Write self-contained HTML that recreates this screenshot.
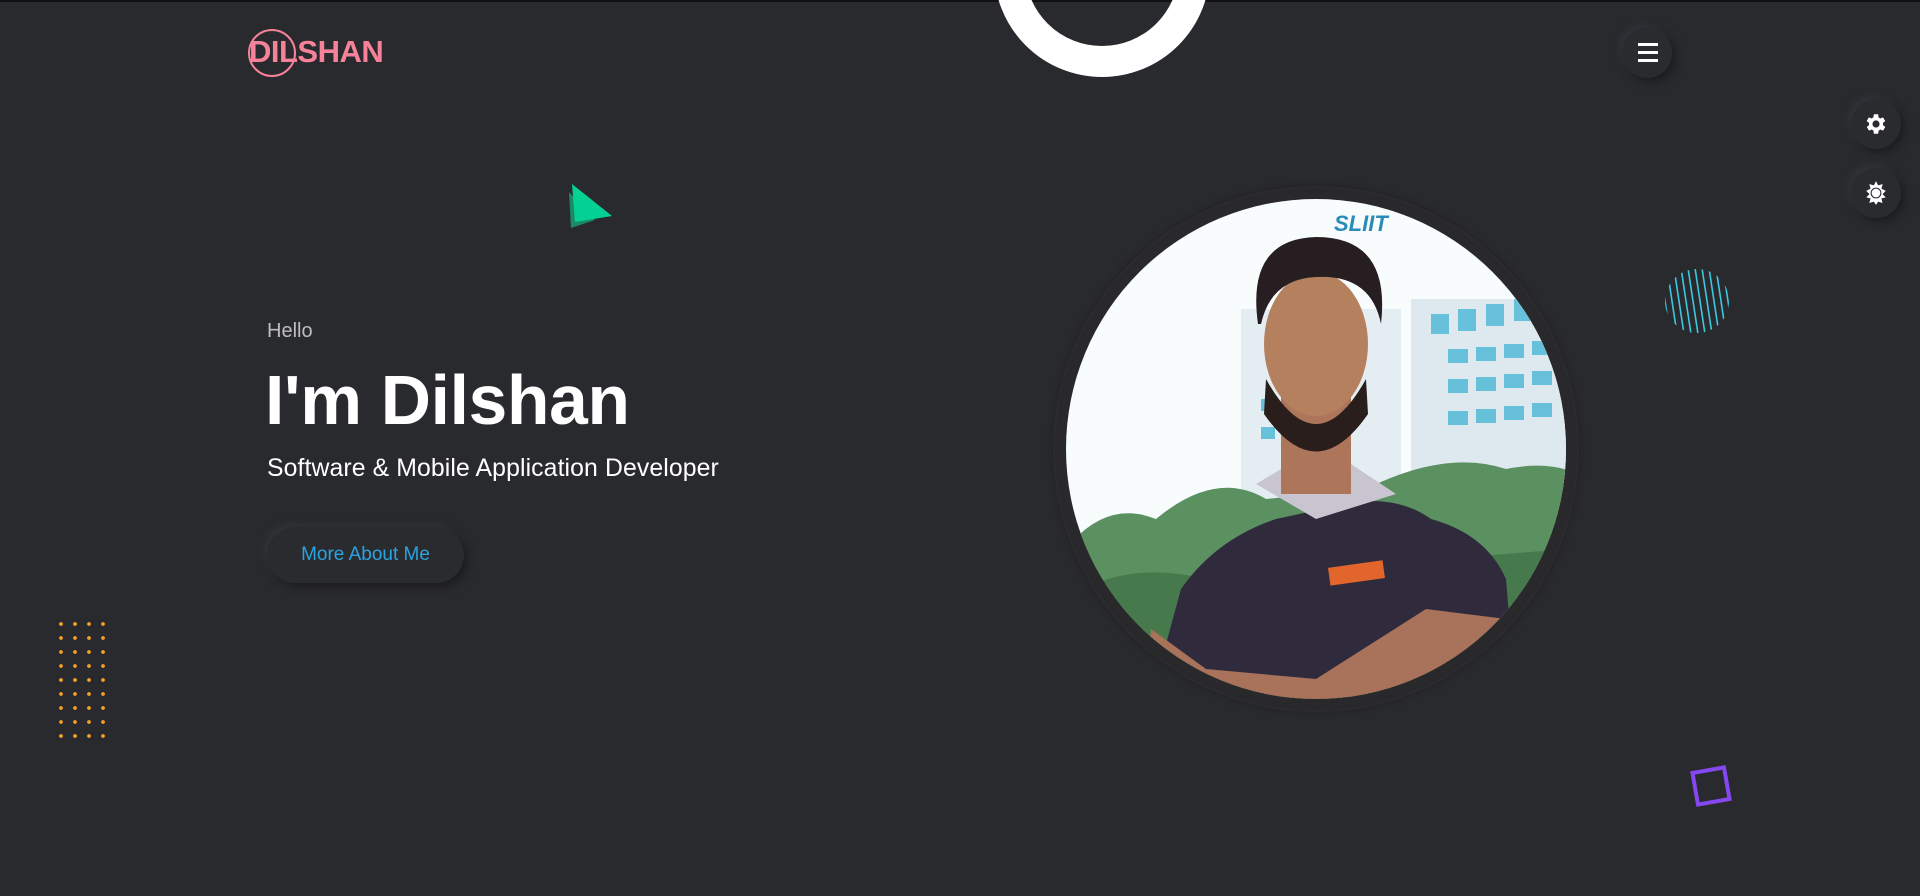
<!DOCTYPE html>
<html><head><meta charset="utf-8"><style>
*{margin:0;padding:0;box-sizing:border-box}
html,body{width:1920px;height:896px;overflow:hidden;background:#292a2e;font-family:"Liberation Sans",Arial,sans-serif}
.abs{position:absolute}
.topline{left:0;top:0;width:1920px;height:2px;background:#111}
.logo{left:249px;top:34px;font-size:31px;font-weight:bold;color:#f6829a;letter-spacing:-0.5px}
.logoc{left:248px;top:29px;width:48px;height:48px;border:2px solid #f6829a;border-radius:50%}
.ring{left:994px;top:-139px;width:216px;height:216px;border-radius:50%;border:31px solid #fff}
.btn{border-radius:50%;background:#2a2b2f;box-shadow:4px 4px 8px #1c1d20,-3px -3px 7px #34353a}
.hello{left:267px;top:320px;font-size:20px;color:#bdbdbd}
.h1{left:265px;top:360px;font-size:69.5px;font-weight:bold;color:#fff;letter-spacing:-0.3px}
.sub{left:267px;top:455px;font-size:24.8px;color:#fff;letter-spacing:0.1px}
.more{left:267px;top:527px;width:197px;height:56px;border-radius:28px;background:#2a2b2f;box-shadow:4px 4px 8px #1c1d20,-3px -3px 7px #34353a;color:#2aa3e0;font-size:19px;line-height:56px;text-align:center}
.dots{left:54px;top:617px;width:56px;height:126px;background-image:radial-gradient(circle,#f5a11f 1.7px,transparent 2.1px);background-size:14px 14px}
.photoOuter{left:1053px;top:186px;width:526px;height:526px;border-radius:50%;background:#29292c;box-shadow:0 0 6px #202124, inset 0 0 4px #333}
.sq{left:1693px;top:768px;width:36px;height:36px;border:4px solid #8447f0;transform:rotate(-10deg)}
</style></head><body>
<div class="abs topline"></div>
<div class="abs logoc"></div>
<div class="abs logo">DILSHAN</div>
<div class="abs ring"></div>

<div class="abs btn" style="left:1622px;top:28px;width:50px;height:50px"></div>
<div class="abs" style="left:1638px;top:43px;width:20px;height:3px;background:#fff"></div>
<div class="abs" style="left:1638px;top:51px;width:20px;height:3px;background:#fff"></div>
<div class="abs" style="left:1638px;top:59px;width:20px;height:3px;background:#fff"></div>

<div class="abs btn" style="left:1851px;top:99px;width:50px;height:50px"></div>
<svg class="abs" style="left:1863px;top:111px" width="26" height="26" viewBox="0 0 24 24"><path fill="#fff" d="M19.4 13a7.5 7.5 0 000-2l2.1-1.6-2-3.5-2.5 1a7 7 0 00-1.7-1L15 3h-4l-.4 2.9a7 7 0 00-1.7 1l-2.5-1-2 3.5L6.6 11a7.5 7.5 0 000 2l-2.1 1.6 2 3.5 2.5-1a7 7 0 001.7 1L11 21h4l.4-2.9a7 7 0 001.7-1l2.5 1 2-3.5zM13 15.3A3.3 3.3 0 1113 8.7a3.3 3.3 0 010 6.6z" transform="translate(-1 0)"/></svg>
<div class="abs btn" style="left:1851px;top:168px;width:50px;height:50px"></div>
<svg class="abs" style="left:1863px;top:180px" width="26" height="26" viewBox="0 0 24 24"><path fill="#fff" d="M12 1l2 4 4.2-1.2L17 8l4 2-3 3 3 3-4 1 1 4.2L14 20l-2 3-2-3-4.2 1.2L7 17l-4-1 3-3-3-3 4-2-1.2-4.2L10 5z"/><circle cx="12" cy="12" r="5" fill="#2a2b2f"/><circle cx="12" cy="12" r="4" fill="#fff"/></svg>

<svg class="abs" style="left:565px;top:180px" width="55" height="52"><polygon points="4,12 6,48 30,40" fill="#1a8a66"/><polygon points="7,4 10,42 47,36" fill="#05d195"/></svg>

<svg class="abs" style="left:1664px;top:268px" width="66" height="66"><defs><clipPath id="cc"><circle cx="33" cy="33" r="32"/></clipPath></defs><g clip-path="url(#cc)" stroke="#3fc7e0" stroke-width="1.6"><line x1="-4" y1="0" x2="6" y2="66"/><line x1="3" y1="0" x2="13" y2="66"/><line x1="10" y1="0" x2="20" y2="66"/><line x1="17" y1="0" x2="27" y2="66"/><line x1="24" y1="0" x2="34" y2="66"/><line x1="31" y1="0" x2="41" y2="66"/><line x1="38" y1="0" x2="48" y2="66"/><line x1="45" y1="0" x2="55" y2="66"/><line x1="52" y1="0" x2="62" y2="66"/><line x1="59" y1="0" x2="69" y2="66"/></g></svg>

<div class="abs hello">Hello</div>
<div class="abs h1">I'm Dilshan</div>
<div class="abs sub">Software &amp; Mobile Application Developer</div>
<div class="abs more">More About Me</div>
<div class="abs dots"></div>

<div class="abs photoOuter"></div>
<svg class="abs" style="left:1066px;top:199px" width="500" height="500" viewBox="0 0 500 500">
<defs><clipPath id="pc"><circle cx="250" cy="250" r="250"/></clipPath></defs>
<g clip-path="url(#pc)">
<rect width="500" height="500" fill="#f8fcfd"/>
<rect x="175" y="110" width="160" height="230" fill="#e4eef2"/>
<rect x="345" y="100" width="160" height="190" fill="#dde9ee"/>
<g fill="#3fb3d4" opacity="0.75">
<rect x="365" y="115" width="18" height="20"/><rect x="392" y="110" width="18" height="22"/><rect x="420" y="105" width="18" height="22"/><rect x="448" y="100" width="18" height="22"/>
<rect x="382" y="150" width="20" height="14"/><rect x="410" y="148" width="20" height="14"/><rect x="438" y="145" width="20" height="14"/><rect x="466" y="142" width="20" height="14"/>
<rect x="382" y="180" width="20" height="14"/><rect x="410" y="178" width="20" height="14"/><rect x="438" y="175" width="20" height="14"/><rect x="466" y="172" width="20" height="14"/>
<rect x="382" y="212" width="20" height="14"/><rect x="410" y="210" width="20" height="14"/><rect x="438" y="207" width="20" height="14"/><rect x="466" y="204" width="20" height="14"/>
<rect x="195" y="200" width="14" height="12"/><rect x="195" y="228" width="14" height="12"/>
</g>
<text x="268" y="32" font-family="Liberation Sans" font-weight="bold" font-size="22" fill="#2a8bb8" font-style="italic">SLIIT</text>
<path d="M0 350 Q40 300 90 320 Q150 270 200 300 L300 290 Q380 250 440 270 Q490 260 520 280 L520 520 L0 520Z" fill="#5b9060"/>
<path d="M0 400 Q60 360 140 380 L500 350 L520 520 L0 520Z" fill="#467a4c"/>
<path d="M85 500 L115 390 Q150 340 210 320 L280 305 Q330 295 365 320 Q420 335 440 380 L450 500Z" fill="#2f2b3d"/>
<path d="M190 285 L240 255 L285 265 L330 295 L250 320Z" fill="#c8c4d0"/>
<rect x="215" y="195" width="70" height="100" fill="#ad765a"/>
<ellipse cx="250" cy="145" rx="52" ry="72" fill="#b5805e"/>
<path d="M200 180 Q250 270 300 180 L302 215 Q250 290 198 215Z" fill="#2a1e1c"/>
<path d="M192 125 Q180 40 250 38 Q325 38 315 125 Q305 75 250 78 Q205 80 195 125Z" fill="#261e20"/>
<rect x="263" y="365" width="55" height="18" fill="#e2662b" transform="rotate(-8 290 374)"/>
<path d="M85 430 L140 470 L250 480 L360 410 L440 420 L420 500 L80 500Z" fill="#a9725a"/>
</g></svg>

<div class="abs sq"></div>
</body></html>
